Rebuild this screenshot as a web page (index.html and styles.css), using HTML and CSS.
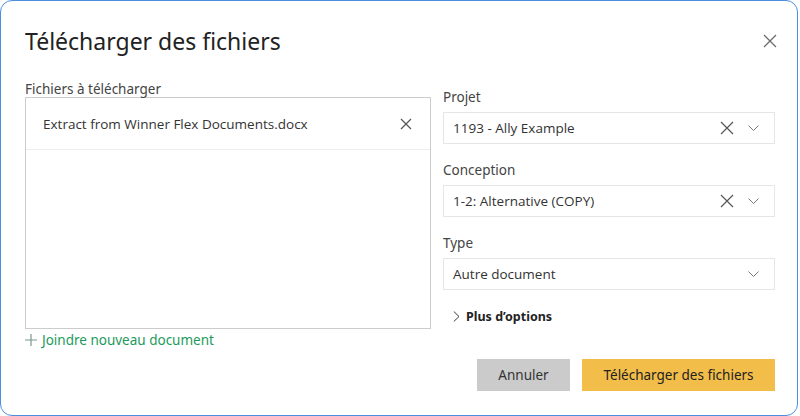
FILE: index.html
```html
<!DOCTYPE html>
<html lang="fr">
<head>
  <meta charset="UTF-8">
  <title>Télécharger des fichiers</title>
  <link rel="stylesheet" href="styles.css">
</head>
<body>
  <div class="dialog">
    <div class="header">
      <h1>Télécharger des fichiers</h1>
      <button class="close" aria-label="Fermer">
        <svg width="14" height="14" viewBox="0 0 14 14"><path d="M1 1L13 13M13 1L1 13" stroke="#6b6b6b" stroke-width="1.3" fill="none"/></svg>
      </button>
    </div>
    <div class="body">
      <div class="left">
        <div class="label">Fichiers à télécharger</div>
        <div class="files">
          <div class="file">
            <span>Extract from Winner Flex Documents.docx</span>
            <svg width="12" height="12" viewBox="0 0 12 12"><path d="M1 1L11 11M11 1L1 11" stroke="#555" stroke-width="1.2" fill="none"/></svg>
          </div>
        </div>
        <a class="add" href="#">
          <svg width="12" height="12" viewBox="0 0 12 12"><path d="M6 0V12M0 6H12" stroke="#7a9a8a" stroke-width="1.2" fill="none"/></svg>
          Joindre nouveau document
        </a>
      </div>
      <div class="right">
        <div class="field">
          <div class="label">Projet</div>
          <div class="select">
            <span>1193 - Ally Example</span>
            <svg class="clear" width="14" height="14" viewBox="0 0 14 14"><path d="M1 1L13 13M13 1L1 13" stroke="#555" stroke-width="1.2" fill="none"/></svg>
            <svg class="chev" width="11" height="7" viewBox="0 0 11 7"><path d="M0.5 0.5L5.5 5.5L10.5 0.5" stroke="#777" stroke-width="1" fill="none"/></svg>
          </div>
        </div>
        <div class="field">
          <div class="label">Conception</div>
          <div class="select">
            <span>1-2: Alternative (COPY)</span>
            <svg class="clear" width="14" height="14" viewBox="0 0 14 14"><path d="M1 1L13 13M13 1L1 13" stroke="#555" stroke-width="1.2" fill="none"/></svg>
            <svg class="chev" width="11" height="7" viewBox="0 0 11 7"><path d="M0.5 0.5L5.5 5.5L10.5 0.5" stroke="#777" stroke-width="1" fill="none"/></svg>
          </div>
        </div>
        <div class="field">
          <div class="label">Type</div>
          <div class="select">
            <span>Autre document</span>
            <svg class="chev" width="11" height="7" viewBox="0 0 11 7"><path d="M0.5 0.5L5.5 5.5L10.5 0.5" stroke="#777" stroke-width="1" fill="none"/></svg>
          </div>
        </div>
        <div class="more">
          <svg width="7" height="11" viewBox="0 0 7 11"><path d="M0.8 0.5L6 5.5L0.8 10.5" stroke="#222" stroke-width="0.9" fill="none"/></svg>
          Plus d’options
        </div>
        <div class="actions">
          <button class="btn cancel">Annuler</button>
          <button class="btn primary">Télécharger des fichiers</button>
        </div>
      </div>
    </div>
  </div>
</body>
</html>
```
FILE: styles.css
```css
html, body {
  margin: 0;
  padding: 0;
  background: #fff;
  font-family: "Noto Sans", "Open Sans", sans-serif;
  color: #333;
}
.dialog {
  width: 798px;
  height: 416px;
  box-sizing: border-box;
  border: 1.5px solid #4a8fe0;
  border-radius: 12px;
  padding: 0 22px 0 24px;
  background: #fff;
}
.header {
  display: flex;
  align-items: center;
  justify-content: space-between;
  height: 80px;
}
h1 {
  margin: 0;
  font-size: 23px;
  font-weight: 400;
  color: #222;
}
.close {
  border: none;
  background: none;
  padding: 0;
  margin-right: -2px;
  display: flex;
}
.body {
  display: flex;
  gap: 12px;
}
.left {
  width: 406px;
}
.label {
  font-size: 13.5px;
  color: #444;
  line-height: 16px;
}
.files {
  height: 230px;
  border: 1px solid #ccc;
}
.file {
  display: flex;
  align-items: center;
  justify-content: space-between;
  height: 51px;
  padding: 0 18px 0 17px;
  border-bottom: 1px solid #ececec;
  font-family: "Open Sans", sans-serif;
  font-size: 13.5px;
  color: #333;
}
.add {
  display: inline-flex;
  align-items: center;
  gap: 5px;
  margin-top: 1px;
  font-size: 13.5px;
  line-height: 16px;
  color: #1e9a5c;
  text-decoration: none;
}
.right {
  flex: 1;
  padding-top: 8px;
}
.field {
  margin-bottom: 18px;
}
.field .label {
  margin-bottom: 7px;
}
.select {
  display: flex;
  align-items: center;
  height: 32px;
  box-sizing: border-box;
  border: 1px solid #e6e6e6;
  padding: 0 15px 0 9px;
  font-family: "Open Sans", sans-serif;
  font-size: 13.5px;
  color: #333;
}
.select span {
  flex: 1;
}
.select .clear {
  margin-right: 14px;
}
.more {
  display: flex;
  align-items: center;
  gap: 6px;
  padding-left: 10px;
  margin-top: 17px;
  font-size: 12.5px;
  font-weight: 700;
  color: #222;
}
.actions {
  display: flex;
  justify-content: flex-end;
  gap: 12px;
  margin-top: 34px;
}
.btn {
  height: 32px;
  border: none;
  font-family: "Noto Sans", sans-serif;
  font-size: 13.5px;
  color: #333;
  cursor: pointer;
}
.cancel {
  width: 93px;
  background: #cbcbcb;
}
.primary {
  width: 193px;
  background: #f3bd4a;
  color: #222;
}
```
